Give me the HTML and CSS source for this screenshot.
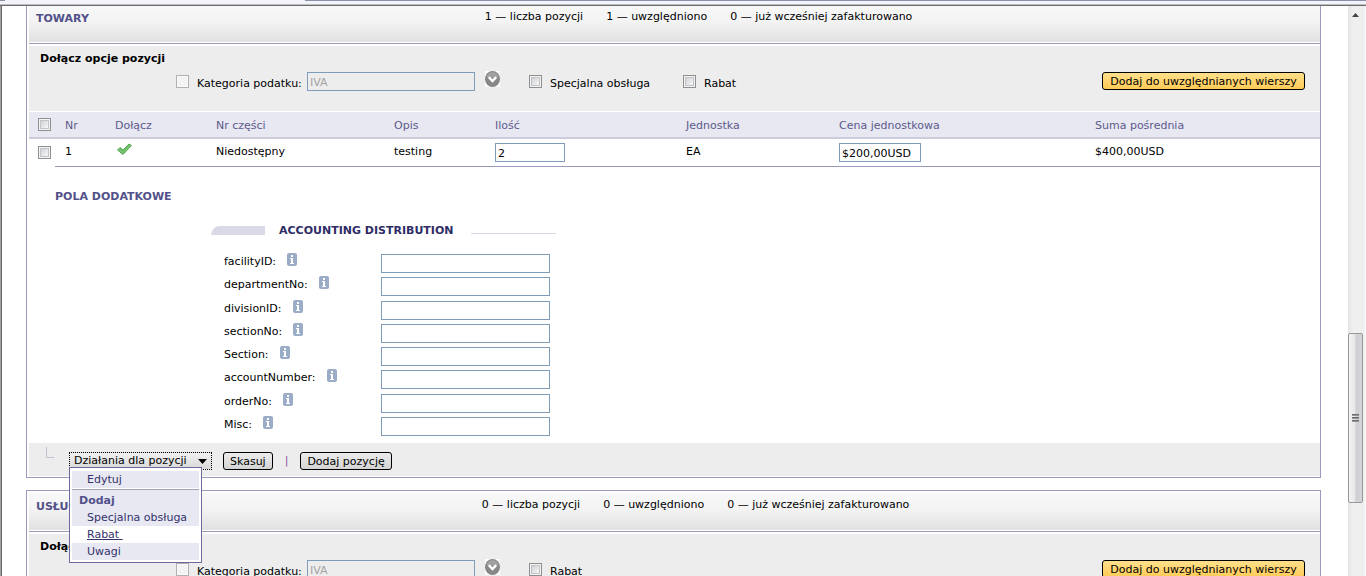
FILE: index.html
```html
<!DOCTYPE html>
<html lang="pl">
<head>
<meta charset="utf-8">
<title>Faktura - pozycje</title>
<link rel="stylesheet" href="styles.css">
</head>
<body>
<svg class="defs" aria-hidden="true">
  <symbol id="info" viewBox="0 0 10 13">
    <rect width="10" height="13" rx="2" fill="#9badc6"/>
    <path d="M4 2h2v2H4zM3 5h3v5h1v1H3v-1h1V6H3z" fill="#fff"/>
  </symbol>
  <symbol id="pick" viewBox="0 0 15 16">
    <rect width="15" height="16" fill="#fff"/>
    <ellipse cx="7.5" cy="8" rx="7.5" ry="8" fill="#878787"/>
    <path d="M1.500 6.500a6 5.500 0 0 1 12 0" fill="#a0a0a0"/>
    <path d="M3.800 6.200l3.700 3.900 3.700-3.900" fill="none" stroke="#fff" stroke-width="2.400"/>
  </symbol>
</svg>
<div class="strip"><div class="strip-left"></div><div class="strip-right"></div></div>
<div class="window">
  <main class="page">
    <section class="panel">
      <header class="panel-head">
        <h2>TOWARY</h2>
        <p class="counts"><span>1 — liczba pozycji</span><span>1 — uwzględniono</span><span>0 — już wcześniej zafakturowano</span></p>
      </header>
      <div class="options">
        <h3>Dołącz opcje pozycji</h3>
        <div class="option-row">
          <input type="checkbox" class="box" id="tax1" disabled>
          <label class="tax-label" for="tax1">Kategoria podatku:</label>
          <input type="text" class="field tax" value="IVA" aria-label="Kategoria podatku" disabled>
          <button type="button" class="pick" aria-label="Wybierz"><svg width="15" height="16"><use href="#pick"/></svg></button>
          <span class="choice"><input type="checkbox" class="box" id="spec1"><label for="spec1">Specjalna obsługa</label></span>
          <span class="choice"><input type="checkbox" class="box" id="rab1"><label for="rab1">Rabat</label></span>
          <button type="button" class="btn gold">Dodaj do uwzględnianych wierszy</button>
        </div>
      </div>
      <table class="lines">
        <colgroup><col class="c-check"><col class="c-no"><col class="c-short"><col class="c-part"><col class="c-short"><col class="c-qty"><col class="c-unit"><col class="c-price"><col></colgroup>
        <thead>
          <tr><th><input type="checkbox" class="box" aria-label="Zaznacz wszystkie"></th><th>Nr</th><th>Dołącz</th><th>Nr części</th><th>Opis</th><th>Ilość</th><th>Jednostka</th><th>Cena jednostkowa</th><th>Suma pośrednia</th></tr>
        </thead>
        <tbody>
          <tr>
            <td><input type="checkbox" class="box" aria-label="Zaznacz pozycję 1"></td>
            <td>1</td>
            <td class="edit"><svg width="17" height="13" viewBox="0 0 17 13" role="img" aria-label="Dołączono"><path d="M2.500 7l2.500-2.500 3 2.500L14 1l2.500 1.500-8.500 9z" fill="#69bb63" stroke="#58a957"/><path d="M4 6.500l4 3L15 2.500" fill="none" stroke="#8ad083"/></svg></td>
            <td>Niedostępny</td>
            <td>testing</td>
            <td class="edit"><input type="text" class="field qty" value="2" aria-label="Ilość"></td>
            <td>EA</td>
            <td class="edit"><input type="text" class="field price" value="$200,00USD" aria-label="Cena jednostkowa"></td>
            <td>$400,00USD</td>
          </tr>
        </tbody>
      </table>
      <div class="extra">
        <h2>POLA DODATKOWE</h2>
        <div class="accounting">
          <div class="legend">
            <svg width="54" height="9" viewBox="0 0 54 9" aria-hidden="true"><path d="M0 9C1 4 3 0 9 0h45v9z" fill="#d9d9e8"/></svg>
            <h3>ACCOUNTING DISTRIBUTION</h3>
            <span class="rule"></span>
          </div>
          <div class="fields">
            <div class="row"><label for="f1">facilityID:</label><svg width="10" height="13"><use href="#info"/></svg><input type="text" class="field" id="f1"></div>
            <div class="row"><label for="f2">departmentNo:</label><svg width="10" height="13"><use href="#info"/></svg><input type="text" class="field" id="f2"></div>
            <div class="row"><label for="f3">divisionID:</label><svg width="10" height="13"><use href="#info"/></svg><input type="text" class="field" id="f3"></div>
            <div class="row"><label for="f4">sectionNo:</label><svg width="10" height="13"><use href="#info"/></svg><input type="text" class="field" id="f4"></div>
            <div class="row"><label for="f5">Section:</label><svg width="10" height="13"><use href="#info"/></svg><input type="text" class="field" id="f5"></div>
            <div class="row"><label for="f6">accountNumber:</label><svg width="10" height="13"><use href="#info"/></svg><input type="text" class="field" id="f6"></div>
            <div class="row"><label for="f7">orderNo:</label><svg width="10" height="13"><use href="#info"/></svg><input type="text" class="field" id="f7"></div>
            <div class="row"><label for="f8">Misc:</label><svg width="10" height="13"><use href="#info"/></svg><input type="text" class="field" id="f8"></div>
          </div>
        </div>
      </div>
      <footer class="actions">
        <svg class="elbow" width="8" height="12" viewBox="0 0 8 12" aria-hidden="true"><path d="M.5 0v10.500H8" fill="none" stroke="#c0c0d2"/></svg>
        <div class="dropdown">
          <button type="button" class="menu-btn" aria-haspopup="true" aria-expanded="true">Działania dla pozycji<svg width="9" height="5" viewBox="0 0 9 5" aria-hidden="true"><path d="M0 0h9L4.500 5z"/></svg></button>
          <div class="menu">
            <a href="#">Edytuj</a>
            <hr>
            <strong>Dodaj</strong>
            <a href="#">Specjalna obsługa</a>
            <a href="#" class="hover">Rabat&nbsp;</a>
            <a href="#">Uwagi</a>
          </div>
        </div>
        <button type="button" class="btn">Skasuj</button>
        <span class="bar">|</span>
        <button type="button" class="btn">Dodaj pozycję</button>
      </footer>
    </section>
    <section class="panel">
      <header class="panel-head">
        <h2>USŁUGI</h2>
        <p class="counts"><span>0 — liczba pozycji</span><span>0 — uwzględniono</span><span>0 — już wcześniej zafakturowano</span></p>
      </header>
      <div class="options">
        <h3>Dołącz opcje pozycji</h3>
        <div class="option-row">
          <input type="checkbox" class="box" id="tax2" disabled>
          <label class="tax-label" for="tax2">Kategoria podatku:</label>
          <input type="text" class="field tax" value="IVA" aria-label="Kategoria podatku" disabled>
          <button type="button" class="pick" aria-label="Wybierz"><svg width="15" height="16"><use href="#pick"/></svg></button>
          <span class="choice"><input type="checkbox" class="box" id="rab2"><label for="rab2">Rabat</label></span>
          <button type="button" class="btn gold">Dodaj do uwzględnianych wierszy</button>
        </div>
      </div>
    </section>
  </main>
  <div class="scrollbar" aria-hidden="true">
    <svg class="up" width="7" height="4" viewBox="0 0 7 4"><path d="M0 4h7L3.500 0z" fill="#444"/></svg>
    <div class="before"></div>
    <div class="thumb"><i></i><i></i><i></i></div>
    <div class="after"></div>
  </div>
</div>
</body>
</html>
```
FILE: styles.css
```css
* { box-sizing: border-box; }
body, input, button {
  font-family: "DejaVu Sans", Verdana, sans-serif;
  font-size: 11px;
  line-height: 14px;
  color: #000;
}
body {
  margin: 0;
  height: 100vh;
  display: flex;
  flex-direction: column;
  overflow: hidden;
  background: #fff;
}
h2, h3, p { margin: 0; font-size: 11px; }
svg { display: block; flex: none; }
.defs { position: absolute; width: 0; height: 0; }

.strip {
  display: flex;
  justify-content: space-between;
  height: 6px;
  flex: none;
  background: #f2f3fb;
  border-bottom: 1px solid #6c6a6c;
  box-shadow: inset 0 -1px #c0bfc0;
}
.strip-left { width: 5px; height: 1px; background: #8c8fa8; }
.strip-right { width: calc(100% - 305px); height: 1px; background: #8c8fa8; }
.window {
  flex: 1;
  min-height: 0;
  display: flex;
  border-left: 1px solid #a0a0a0;
  box-shadow: inset 1px 0 #696969;
}
.page {
  flex: 1;
  min-width: 0;
  overflow: hidden;
  padding: 0 27px 0 25px;
}

.panel {
  border: 1px solid #9c9abb;
  padding: 2px 0 1px 2px;
  margin-bottom: 12px;
}
.panel:first-child { margin-top: -4px; }
.panel-head {
  display: flex;
  height: 39px;
  border-bottom: 1px solid #9c9abb;
  background: linear-gradient(#f8f8f8, #f4f4f4 40%, #e0e0e0);
  box-shadow: inset 0 -1px #fff;
  margin-bottom: 2px;
}
h2 { color: #53518a; }
.panel-head h2 { width: 35%; padding: 7px 0 0 7px; }
.counts { display: flex; gap: 23px; padding: 5px 0 0 4px; }
.panel + .panel .counts { padding-left: 1px; }

.options { min-height: 65px; background: #ededed; padding: 6px 15px 0 11px; }
.option-row { display: flex; align-items: center; margin-top: 5px; padding-left: 136px; }
.option-row label { padding-top: 6px; }
.tax-label { width: 110px; margin-left: 8px; white-space: nowrap; }
.choice { display: flex; align-items: center; gap: 8px; margin-left: 29px; }
.choice label { min-width: 104px; }
.pick { border: 0; padding: 0; margin-left: 10px; margin-bottom: 4px; background: none; }

.box {
  appearance: none;
  flex: none;
  display: block;
  width: 13px;
  height: 13px;
  margin: 0;
  border: 1px solid #8e8f8f;
  background: linear-gradient(135deg, #c4c8d0, #f6f6f6 80%);
  box-shadow: inset 0 0 0 1px #f4f4f4, inset 0 0 0 2px #c2c3c6;
}
.box:disabled { border-color: #b1b1b1; background: #f3f3f3; box-shadow: inset 0 0 0 1px #fafafa; }
.field {
  width: 169px;
  height: 19px;
  margin: 0;
  padding: 2px 2px 0;
  border: 1px solid #7f9db9;
  background: #fff;
}
.tax { width: 168px; background: #ededed; color: #a5a2a5; }
.qty { width: 70px; display: block; }
.price { width: 82px; display: block; }
.btn {
  height: 18px;
  padding: 1px 6px 0;
  border: 1px solid #000;
  border-radius: 3px;
  background: linear-gradient(#ececec, #d4d4d4);
}
.btn.gold { margin-left: auto; min-width: 203px; background: linear-gradient(#ffe08c, #ffcb57); }

.lines { width: 100%; margin-top: 1px; table-layout: fixed; border-collapse: separate; border-spacing: 0; }
.c-check { width: 26px; }
.c-no { width: 50px; }
.c-short { width: 101px; }
.c-part { width: 178px; }
.c-qty { width: 191px; }
.c-unit { width: 153px; }
.c-price { width: 256px; }
.lines th {
  height: 27px;
  padding: 2px 0 0 10px;
  border-bottom: 2px solid #ccccdd;
  background: #e7e8f1;
  color: #5d5a8c;
  font-weight: normal;
  text-align: left;
}
.lines td { height: 28px; padding: 6px 0 0 10px; border-bottom: 1px solid #9c9abb; vertical-align: top; }
.lines th:first-child { padding: 0 0 0 9px; }
.lines td:first-child { padding: 7px 0 0 9px; border-bottom: 0; }
.lines td.edit { padding-top: 4px; }

.extra { padding: 23px 0 7px 26px; }
.accounting { width: 345px; margin: 20px 0 0 156px; }
.legend { display: flex; align-items: center; }
.legend svg { margin-bottom: 2px; }
.legend h3 { color: #2f2d66; margin-left: 14px; }
.legend .rule { width: 85px; align-self: flex-end; height: 1px; margin: 0 0 4px auto; background: #d9d9e8; }
.fields {
  display: flex;
  flex-direction: column;
  justify-content: space-between;
  min-height: 183px;
  margin: 15px 6px 0 13px;
}
.row { display: flex; align-items: flex-start; }
.row label { padding-top: 2px; }
.row svg { margin-left: 11px; }
.row .field { margin: 1px 0 0 auto; }

.actions { display: flex; align-items: center; height: 33px; padding: 3px 0 0 17px; background: #ededed; }
.elbow { align-self: flex-start; margin: 1px 15px 0 0; }
.dropdown { position: relative; margin-right: 11px; }
.menu-btn {
  display: flex;
  align-items: center;
  justify-content: space-between;
  min-width: 143px;
  height: 18px;
  padding: 0 4px;
  border: 1px dotted #000;
  background: linear-gradient(#f0f0f0, #d8d8d8);
  white-space: nowrap;
}
.menu {
  position: absolute;
  z-index: 1;
  top: 15px;
  left: 0;
  width: 133px;
  padding: 3px 2px 2px;
  border: 1px solid #6b6a9c;
  background: #fff;
  line-height: 17px;
}
.menu a { display: block; padding-left: 15px; background: #e7e8f1; color: #34326b; text-decoration: none; }
.menu strong { display: block; height: 19px; padding: 2px 0 0 7px; background: #e7e8f1; color: #53518a; }
.menu hr { height: 1px; margin: 1px 0 0; border: 0; background: #a5a4bd; }
.menu .hover { background: #fff; text-decoration: underline; }
.bar { margin: 0 12px; color: #8a4fa8; }

.scrollbar {
  flex: none;
  display: flex;
  flex-direction: column;
  align-items: center;
  width: 18px;
  padding-right: 3px;
  background: linear-gradient(90deg, #e4e4e4, #f0f0f0 30%, #eeeeee 85%, #fafafa);
}
.up { margin-top: 7px; }
.before { flex: 317; }
.after { flex: 73; }
.thumb {
  display: flex;
  flex-direction: column;
  justify-content: center;
  align-items: center;
  gap: 1px;
  width: 15px;
  height: 170px;
  border: 1px solid #979797;
  border-radius: 2px;
  background: linear-gradient(90deg, #f4f4f4, #e6e6e8 45%, #cdcdd2 55%, #d6d6da);
}
.thumb i { width: 7px; height: 2px; background: linear-gradient(#555, #aaa); }
```
